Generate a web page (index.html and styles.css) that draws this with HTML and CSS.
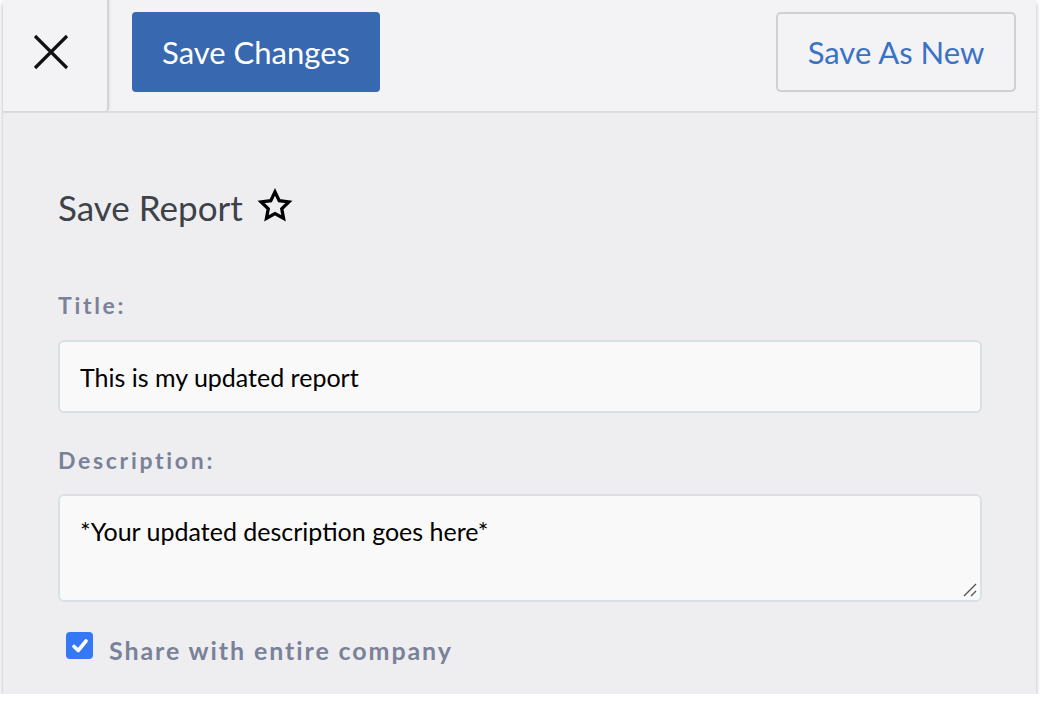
FILE: index.html
```html
<!DOCTYPE html>
<html>
<head>
<meta charset="utf-8">
<link rel="stylesheet" href="styles.css">
</head>
<body>
<div class="panel">
  <div class="header">
    <button class="close" aria-label="Close">
      <svg width="36" height="36" viewBox="0 0 36 36"><path d="M2 2 L34 34 M34 2 L2 34" stroke="#111" stroke-width="3.2" stroke-linecap="butt"/></svg>
    </button>
    <button class="btn-primary">Save Changes</button>
    <div class="spacer"></div>
    <button class="btn-secondary">Save As New</button>
  </div>
  <div class="content">
    <h2 class="title">Save Report
      <svg class="star" width="36" height="36" viewBox="0 0 24 24"><path d="M12 2.6 L14.8 8.5 L21.2 9.3 L16.5 13.8 L17.7 20.2 L12 17.1 L6.3 20.2 L7.5 13.8 L2.8 9.3 L9.2 8.5 Z" fill="none" stroke="#000" stroke-width="2.2" stroke-linejoin="miter"/></svg>
    </h2>
    <label class="field-label">Title:</label>
    <div class="input">This is my updated report</div>
    <label class="field-label">Description:</label>
    <div class="textarea">*Your updated description goes here*
      <svg class="grip" width="14" height="14" viewBox="0 0 14 14"><path d="M1 13 L13 1 M8 13 L13 8" stroke="#555" stroke-width="1.4"/></svg>
    </div>
    <div class="share">
      <span class="checkbox">
        <svg width="20" height="20" viewBox="0 0 20 20"><path d="M4 10.5 L8.2 14.5 L16 5" fill="none" stroke="#fff" stroke-width="3.6" stroke-linecap="round" stroke-linejoin="round"/></svg>
      </span>
      <span class="share-label">Share with entire company</span>
    </div>
  </div>
</div>
</body>
</html>
```

FILE: styles.css
```css
html, body {
  margin: 0;
  padding: 0;
  background: #ffffff;
  font-family: Lato, "Open Sans", sans-serif;
}

.panel {
  width: 1033px;
  height: 694px;
  margin-left: 3px;
  background: #eeeef1;
  box-shadow: 0 3px 5px rgba(0,0,0,0.3);
  display: flex;
  flex-direction: column;
}

.header {
  height: 111px;
  background: #f3f3f5;
  border-bottom: 2px solid #dcdcdf;
  display: flex;
  align-items: flex-start;
  flex-shrink: 0;
}

.close {
  width: 106px;
  height: 111px;
  border: none;
  border-right: 2px solid #d3d3d6;
  border-bottom-right-radius: 4px;
  background: #f3f3f5;
  display: flex;
  align-items: center;
  justify-content: center;
  padding: 0 9px 8px 0;
  box-shadow: 1px 0 2px rgba(0,0,0,0.08);
}

.btn-primary {
  margin-left: 23px;
  margin-top: 12px;
  width: 248px;
  height: 80px;
  border: none;
  border-radius: 4px;
  background: #3869b0;
  color: #ffffff;
  font-family: Lato, sans-serif;
  font-size: 31px;
  padding: 0;
}

.spacer { flex: 1; }

.btn-secondary {
  margin-top: 12px;
  margin-right: 20px;
  width: 240px;
  height: 80px;
  border: 2px solid #cfcfd2;
  border-radius: 5px;
  background: #f3f3f5;
  color: #3a72c4;
  font-family: Lato, sans-serif;
  font-size: 31px;
  padding: 0;
}

.content {
  padding: 0 54px 0 55px;
  display: flex;
  flex-direction: column;
}

.title {
  margin: 74px 0 0 0;
  font-weight: 400;
  font-size: 35px;
  line-height: 40px;
  color: #3d4249;
  display: flex;
  align-items: center;
  gap: 14px;
}

.star { margin-top: -2px; }

.field-label {
  display: block;
  font-weight: 700;
  font-size: 23px;
  letter-spacing: 2.7px;
  color: #7a8299;
  line-height: 28px;
}

.title + .field-label { margin-top: 64px; }

.input {
  margin-top: 21px;
  box-sizing: border-box;
  height: 73px;
  background: #f9f9f9;
  border: 2px solid #d8e0e8;
  border-radius: 6px;
  padding: 0 20px;
  display: flex;
  align-items: center;
  font-size: 25px;
  color: #000;
}

.input + .field-label { margin-top: 33px; }

.textarea {
  margin-top: 20px;
  box-sizing: border-box;
  height: 108px;
  background: #f9f9f9;
  border: 2px solid #d8e0e8;
  border-radius: 6px;
  padding: 20px 20px 0 20px;
  font-size: 25px;
  line-height: 30px;
  color: #000;
  position: relative;
}

.grip {
  position: absolute;
  right: 3px;
  bottom: 3px;
}

.share {
  margin-top: 30px;
  margin-left: 8px;
  display: flex;
  align-items: flex-start;
  gap: 16px;
}

.checkbox {
  width: 27px;
  height: 27px;
  border-radius: 4px;
  background: #3478f6;
  display: flex;
  align-items: center;
  justify-content: center;
  flex-shrink: 0;
}

.share-label {
  font-weight: 700;
  font-size: 25px;
  line-height: 30px;
  letter-spacing: 1.9px;
  color: #7a8299;
  margin-top: 3px;
}
```
